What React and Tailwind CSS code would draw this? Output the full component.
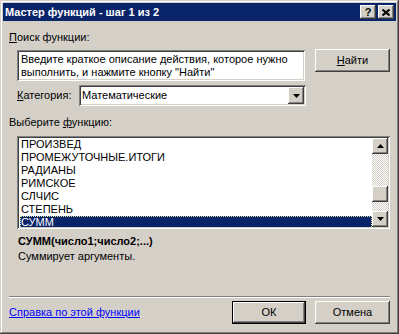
import React from "react";

const raised =
  "bg-[#d4d0c8] shadow-[inset_-1px_-1px_#404040,inset_1px_1px_#fff,inset_-2px_-2px_#808080,inset_2px_2px_#d4d0c8]";
const sunken =
  "bg-white shadow-[inset_1px_1px_#808080,inset_-1px_-1px_#fff,inset_2px_2px_#404040,inset_-2px_-2px_#d4d0c8]";

function Arrow({ up }) {
  return (
    <svg width="7" height="4" viewBox="0 0 7 4">
      {up ? (
        <path d="M3.5 0 L7 4 L0 4 Z" fill="#000" />
      ) : (
        <path d="M0 0 L7 0 L3.5 4 Z" fill="#000" />
      )}
    </svg>
  );
}

const functions = [
  "ПРОИЗВЕД",
  "ПРОМЕЖУТОЧНЫЕ.ИТОГИ",
  "РАДИАНЫ",
  "РИМСКОЕ",
  "СЛЧИС",
  "СТЕПЕНЬ",
  "СУММ",
];

export default function App() {
  return (
    <div className="w-[399px] h-[334px] bg-[#d4d0c8] p-[3px] flex flex-col text-[11px] leading-[13px] text-black font-['Liberation_Sans',Arial,sans-serif] shadow-[inset_-1px_-1px_#404040,inset_1px_1px_#d4d0c8,inset_-2px_-2px_#808080,inset_2px_2px_#fff]">
      {/* Title bar */}
      <div className="h-[18px] bg-[#0a246a] flex items-center pl-[2px] pr-[2px]">
        <span className="flex-1 text-white font-bold">Мастер функций - шаг 1 из 2</span>
        <div className="flex gap-[2px]">
          <div className={`w-[16px] h-[14px] flex items-center justify-center font-bold text-[11px] ${raised}`}>
            ?
          </div>
          <div className={`w-[16px] h-[14px] flex items-center justify-center ${raised}`}>
            <svg width="8" height="7" viewBox="0 0 8 7">
              <path d="M0.5 0.5 L7.5 6.5 M7.5 0.5 L0.5 6.5" stroke="#000" strokeWidth="2" />
            </svg>
          </div>
        </div>
      </div>

      {/* Body */}
      <div className="flex flex-col">
        <div className="mt-[10px] ml-[6px]">
          <span className="underline">П</span>оиск функции:
        </div>

        <div className="mt-[5px] flex items-start">
          <div className={`ml-[14px] mt-[1px] w-[288px] h-[31px] pl-[4px] pt-[3px] ${sunken}`}>
            Введите краткое описание действия, которое нужно
            <br />
            выполнить, и нажмите кнопку "Найти"
          </div>
          <div className={`ml-[10px] w-[75px] h-[23px] flex items-center justify-center ${raised}`}>
            <span>
              <span className="underline">Н</span>айти
            </span>
          </div>
        </div>

        <div className="mt-[4px] flex items-center">
          <div className="ml-[14px] w-[62px]">
            <span className="underline">К</span>атегория:
          </div>
          <div className={`w-[227px] h-[21px] flex items-center p-[2px] ${sunken}`}>
            <span className="flex-1 pl-[1px]">Математические</span>
            <div className={`w-[16px] h-[17px] flex items-center justify-center ${raised}`}>
              <Arrow />
            </div>
          </div>
        </div>

        <div className="mt-[10px] ml-[6px]">
          Выберите <span className="underline">ф</span>ункцию:
        </div>

        {/* List */}
        <div className={`mt-[7px] ml-[14px] w-[373px] h-[93px] p-[2px] flex ${sunken}`}>
          <div className="flex-1 overflow-hidden pl-px">
            {functions.map((f, i) =>
              i === functions.length - 1 ? (
                <div
                  key={f}
                  className="h-[13px] bg-[#0a246a] text-white border border-dotted border-[#e8e0a0] leading-[11px]"
                >
                  {f}
                </div>
              ) : (
                <div key={f} className="h-[13px] pl-px">
                  {f}
                </div>
              )
            )}
          </div>
          <div className="w-[16px] flex flex-col">
            <div className={`h-[16px] flex items-center justify-center ${raised}`}>
              <Arrow up />
            </div>
            <div className="flex-1 bg-[repeating-conic-gradient(#fff_0%_25%,#d4d0c8_0%_50%)] bg-[length:2px_2px]">
              <div className={`mt-[32px] h-[16px] ${raised}`} />
            </div>
            <div className={`h-[16px] flex items-center justify-center ${raised}`}>
              <Arrow />
            </div>
          </div>
        </div>

        <div className="mt-[6px] ml-[15px] font-bold">СУММ(число1;число2;...)</div>
        <div className="mt-[2px] ml-[15px]">Суммирует аргументы.</div>

        <div className="mt-[33px] ml-[6px] w-[381px] h-[2px] border-t border-[#808080] border-b border-b-white" />

        <div className="mt-[3px] mx-[6px] flex items-center">
          <span className="flex-1 text-[#0000ff] underline">Справка по этой функции</span>
          <div className="w-[74px] h-[23px] border border-black">
            <div className="w-full h-full flex items-center justify-center shadow-[inset_-1px_-1px_#404040,inset_1px_1px_#fff,inset_-2px_-2px_#808080]">
              ОК
            </div>
          </div>
          <div className={`ml-[9px] w-[75px] h-[23px] flex items-center justify-center ${raised}`}>
            Отмена
          </div>
        </div>
      </div>
    </div>
  );
}
